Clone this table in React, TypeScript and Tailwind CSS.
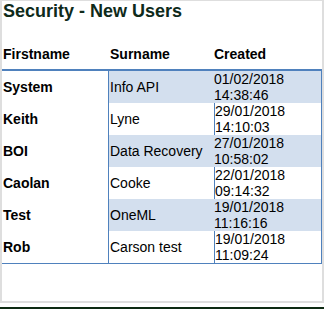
const rows = [
  { first: 'System', last: 'Info API', date: '01/02/2018', time: '14:38:46' },
  { first: 'Keith', last: 'Lyne', date: '29/01/2018', time: '14:10:03' },
  { first: 'BOI', last: 'Data Recovery', date: '27/01/2018', time: '10:58:02' },
  { first: 'Caolan', last: 'Cooke', date: '22/01/2018', time: '09:14:32' },
  { first: 'Test', last: 'OneML', date: '19/01/2018', time: '11:16:16' },
  { first: 'Rob', last: 'Carson test', date: '19/01/2018', time: '11:09:24' },
];

export default function App() {
  return (
    <div className="w-[324px] h-[309px] bg-white font-['Liberation_Sans',Arial,sans-serif] text-black">
      <div className="h-[303px] border-t border-l-2 border-r-2 border-b-2 border-[#dedede]">
        <h2 className="pl-[1px] text-[18px] leading-[21px] font-bold text-[#0e2a1a]">Security - New Users</h2>

        {/* header */}
        <div className="mt-6 flex h-[23px] text-[14px] leading-4 font-bold">
          <div className="w-[106px] pl-[1px]">Firstname</div>
          <div className="w-[106px] pl-[2px]">Surname</div>
          <div className="flex-1">Created</div>
        </div>

        <div className="border-t-2 border-b border-[#4f81bd]">
          {rows.map((r, i) => {
            const shaded = i % 2 === 0;
            return (
              <div key={r.first} className="flex h-8 text-[14px] leading-4">
                <div className="w-[106px] pl-[1px] flex items-center font-bold">{r.first}</div>
                <div
                  className={
                    'flex flex-1 border-l border-r border-[#4f81bd] ' + (shaded ? 'bg-[#d3dfee]' : 'bg-white')
                  }
                >
                  <div className="w-[105px] pl-[1px] flex items-center whitespace-nowrap">{r.last}</div>
                  <div className={'flex-1 ' + (shaded ? '' : 'border-l border-[#4f81bd]')}>
                    <div>{r.date}</div>
                    <div>{r.time}</div>
                  </div>
                </div>
              </div>
            );
          })}
        </div>
      </div>
      <div className="mt-1 h-[2px] bg-[#0d2a12]" />
    </div>
  );
}
